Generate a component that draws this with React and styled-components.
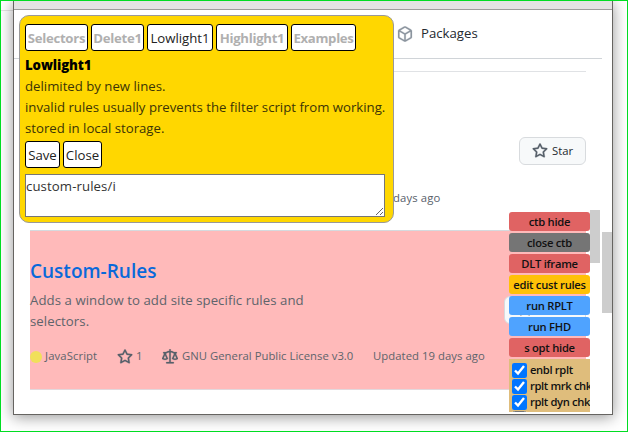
import React from "react";
import styled, { createGlobalStyle } from "styled-components";

const Global = createGlobalStyle`
  *, *::before, *::after { box-sizing: border-box; }
  body { margin: 0; background: #fff; }
  body, button, textarea { font-family: "Open Sans", "Noto Sans", sans-serif; }
`;

const Desktop = styled.div`
  width: 628px;
  height: 432px;
  padding: 0 13px 16px 12px;
  border: 1px solid #00dd22;
  overflow: hidden;
  background: linear-gradient(#e4e4e4, #e4e4e4) 0 9px / 12px 1px no-repeat, #fff;
`;

const Window = styled.div`
  position: relative;
  display: flex;
  flex-direction: column;
  width: 600px;
  height: 414px;
  border: 1px solid #666461;
  border-top: 0;
  background: #fff;
  box-shadow: 0 2px 14px rgba(0, 0, 0, 0.42);
`;

const TitleBar = styled.div`
  flex: none;
  height: 9px;
  background: #e3e3e3;
  border-bottom: 1px solid #9c9c9c;
`;

const Page = styled.div`
  display: flex;
  flex: 1;
  min-height: 0;
`;

const Main = styled.main`
  width: 588px;
`;

const ScrollTrack = styled.div`
  width: 10px;
  padding-top: ${(p) => p.$top || 0}px;
`;

const ScrollThumb = styled.div`
  height: ${(p) => p.$h}px;
  background: #cdcdcd;
`;

const Nav = styled.nav`
  display: flex;
  align-items: center;
  gap: 8px;
  height: 49px;
  padding: 0 0 1px 383px;
  border-bottom: 1px solid #d0d4d8;
`;

const Label = styled.span`
  font-size: ${(p) => p.$size || 13.2}px;
  font-weight: ${(p) => p.$weight || 400};
  letter-spacing: ${(p) => p.$track || 0}px;
  line-height: 1.5;
  white-space: nowrap;
  color: ${(p) => p.$color || "inherit"};
`;

const Repositories = styled.div`
  margin: 12px 16px 0;
  border-top: 1px solid #e0e2e5;
`;

const PreviousRepo = styled.section`
  display: flex;
  flex-direction: column;
  align-items: flex-end;
  height: 158px;
  padding-top: 65px;
`;

const StarButton = styled.button`
  display: flex;
  align-items: center;
  gap: 4px;
  width: ${(p) => p.$w || 67}px;
  height: 28px;
  padding: 0 12px ${(p) => p.$lift || 0}px;
  border: 1px solid #d8dbde;
  border-radius: 6px;
  background: #f7f9fa;
  color: #24292f;
`;

const PreviousDate = styled.div`
  display: flex;
  width: 100%;
  padding: 25px 0 0 363px;
`;

const RepoCard = styled.section`
  display: flex;
  justify-content: space-between;
  height: 160px;
  border-top: 1px solid #d5dade;
  border-bottom: 1px solid #e2d8dc;
  background: #ffbaba;
  color: #5e646b;
`;

const RepoText = styled.div`
  display: flex;
  flex-direction: column;
  width: 460px;
  padding-top: 26px;
`;

const Description = styled.p`
  width: 300px;
  margin: 4px 0 0;
  font-size: 13.2px;
  line-height: 21px;
  letter-spacing: 0.07px;
`;

const Meta = styled.div`
  display: flex;
  align-items: center;
  margin-top: 16px;
  height: 18px;
`;

const MetaItem = styled.div`
  display: flex;
  flex: none;
  align-items: center;
  gap: ${(p) => p.$gap || 3}px;
  width: ${(p) => p.$w}px;
`;

const LanguageDot = styled.i`
  width: 12px;
  height: 12px;
  border-radius: 50%;
  background: #f1e05a;
`;

const CardAction = styled.div`
  flex: none;
  padding-top: 65px;
`;

const RulesPanel = styled.section`
  position: absolute;
  left: 5px;
  top: 14px;
  width: 375px;
  height: 208px;
  padding: 8px 5px;
  border: 1px solid #999;
  border-radius: 10px;
  background: #ffd700;
  color: #3c3406;
`;

const ButtonRow = styled.div`
  display: flex;
  gap: 3px;
`;

const PanelButton = styled.button`
  width: ${(p) => p.$w}px;
  height: 27px;
  padding: 0;
  border: 1px solid #000;
  border-radius: 3px;
  background: #fff;
  color: ${(p) => (p.$dim ? "#b0b0b0" : "#222")};
  font-size: 13.2px;
  font-weight: ${(p) => (p.$dim ? 700 : 400)};
  letter-spacing: ${(p) => (p.$dim ? -0.3 : 0)}px;
  white-space: nowrap;
`;

const Help = styled.div`
  display: flex;
  flex-direction: column;
  padding: 4px 0 2px;
  font-size: 13.2px;
  line-height: 21px;
  white-space: nowrap;
`;

const HelpTitle = styled.strong`
  color: #000;
  font-weight: 800;
  letter-spacing: -0.1px;
`;

const RulesInput = styled.textarea`
  display: block;
  width: 360px;
  height: 43px;
  margin-top: 6px;
  padding: 1px 0;
  border: 1px solid #767676;
  border-radius: 0;
  background: #fff;
  color: #333;
  font-size: 13.2px;
  line-height: 21px;
  letter-spacing: 0.1px;
  resize: both;
`;

const Toolbox = styled.aside`
  position: absolute;
  left: 495px;
  top: 209px;
  display: flex;
  width: 91px;
  height: 202px;
  overflow: hidden;
`;

const ToolList = styled.div`
  display: flex;
  flex-direction: column;
  gap: 2px;
  width: 81px;
  padding-top: 2px;
`;

const toolColors = {
  red: "#e06363",
  gray: "#757575",
  amber: "#ffc107",
  blue: "#4fa3ff",
};

const ToolButton = styled.button`
  flex: none;
  height: 19px;
  padding: 0;
  border: 0;
  border-radius: 3px;
  background: ${(p) => toolColors[p.$tone]};
  color: #111;
  font-size: 11.2px;
  font-weight: 650;
  letter-spacing: -0.25px;
  line-height: 19px;
  white-space: nowrap;
`;

const Options = styled.div`
  flex: none;
  height: 53px;
  padding: 3px 0 0 3px;
  overflow: hidden;
  background: #dfbd7c;
`;

const Option = styled.label`
  display: flex;
  align-items: center;
  gap: 3px;
  height: 16px;
  color: #111;
`;

const Check = styled.input`
  flex: none;
  width: 15px;
  height: 15px;
  margin: 0;
  accent-color: #0075ff;
`;

const icons = {
  star: "M8 .25a.75.75 0 0 1 .673.418l1.882 3.815 4.21.612a.75.75 0 0 1 .416 1.279l-3.046 2.97.719 4.192a.751.751 0 0 1-1.088.791L8 12.347l-3.766 1.98a.75.75 0 0 1-1.088-.79l.72-4.194L.818 6.374a.75.75 0 0 1 .416-1.28l4.21-.611L7.327.668A.75.75 0 0 1 8 .25Zm0 2.445L6.615 5.5a.75.75 0 0 1-.564.41l-3.097.45 2.24 2.184a.75.75 0 0 1 .216.664l-.528 3.084 2.769-1.456a.75.75 0 0 1 .698 0l2.77 1.456-.53-3.084a.75.75 0 0 1 .216-.664l2.24-2.183-3.096-.45a.75.75 0 0 1-.564-.41L8 2.694Z",
  law: "M8.75.75V2h.985c.304 0 .603.08.867.231l1.29.736c.038.022.08.033.124.033h2.234a.75.75 0 0 1 0 1.5h-.427l2.111 4.692a.75.75 0 0 1-.154.838c-.21.21-.47.37-.731.485C14.556 10.78 13.88 11 13 11a4.498 4.498 0 0 1-2.023-.454 3.544 3.544 0 0 1-.758-.505.75.75 0 0 1-.154-.849L12.178 4.5h-.162c-.305 0-.604-.079-.868-.231l-1.29-.736a.245.245 0 0 0-.124-.033H8.75V13h2.5a.75.75 0 0 1 0 1.5h-6.5a.75.75 0 0 1 0-1.5h2.5V3.5h-.984a.245.245 0 0 0-.124.033l-1.289.737c-.265.15-.564.23-.869.23h-.162l2.112 4.692a.75.75 0 0 1-.154.838c-.21.21-.47.37-.731.485C4.556 10.78 3.88 11 3 11a4.498 4.498 0 0 1-2.023-.454 3.544 3.544 0 0 1-.758-.505.75.75 0 0 1-.154-.849L2.178 4.5H1.75a.75.75 0 0 1 0-1.5h2.234a.249.249 0 0 0 .125-.033l1.288-.737c.265-.15.564-.23.869-.23h.984V.75a.75.75 0 0 1 1.5 0Zm2.945 8.477c.285.135.718.273 1.305.273s1.02-.138 1.305-.273L13 6.327Zm-10 0c.285.135.718.273 1.305.273s1.02-.138 1.305-.273L3 6.327Z",
  package:
    "m8.878.392 5.25 3.045c.54.314.872.89.872 1.514v6.098a1.75 1.75 0 0 1-.872 1.514l-5.25 3.045a1.75 1.75 0 0 1-1.756 0l-5.25-3.045A1.75 1.75 0 0 1 1 11.049V4.951c0-.624.332-1.201.872-1.514L7.122.392a1.75 1.75 0 0 1 1.756 0ZM7.875 1.69l-4.63 2.685L8 7.133l4.755-2.758-4.63-2.685a.248.248 0 0 0-.25 0ZM2.5 5.677v5.372c0 .09.047.171.125.216l4.625 2.683V8.432Zm6.25 8.271 4.625-2.683a.25.25 0 0 0 .125-.216V5.677L8.75 8.432Z",
};

const IconSvg = styled.svg`
  flex: none;
  fill: ${(p) => p.$color || "#57606a"};
  stroke: ${(p) => p.$color || "#57606a"};
  stroke-width: 0.2;
`;

const Icon = ({ name, color }) => (
  <IconSvg width="16" height="16" viewBox="0 0 16 16" $color={color}>
    <path fillRule="evenodd" d={icons[name]} />
  </IconSvg>
);

const tabs = [
  { name: "Selectors", w: 63, dim: true },
  { name: "Delete1", w: 53, dim: true },
  { name: "Lowlight1", w: 66 },
  { name: "Highlight1", w: 72, dim: true },
  { name: "Examples", w: 65, dim: true },
];

const tools = [
  { name: "ctb hide", tone: "red" },
  { name: "close ctb", tone: "gray" },
  { name: "DLT iframe", tone: "red" },
  { name: "edit cust rules", tone: "amber" },
  { name: "run RPLT", tone: "blue" },
  { name: "run FHD", tone: "blue" },
  { name: "s opt hide", tone: "red" },
];

const options = ["enbl rplt", "rplt mrk chk", "rplt dyn chk"];

export default function App() {
  return (
    <Desktop>
      <Global />
      <Window>
        <TitleBar />
        <Page>
          <Main>
            <Nav>
              <Icon name="package" color="#8c959f" />
              <Label $color="#24292f">Packages</Label>
            </Nav>
            <Repositories>
              <PreviousRepo>
                <StarButton>
                  <Icon name="star" />
                  <Label $size={11.3}>Star</Label>
                </StarButton>
                <PreviousDate>
                  <Label $size={11.3} $track={0.12} $color="#57606a">days ago</Label>
                </PreviousDate>
              </PreviousRepo>
              <RepoCard>
                <RepoText>
                  <Label $size={19} $weight={600} $color="#0969da">Custom-Rules</Label>
                  <Description>
                    Adds a window to add site specific rules and selectors.
                  </Description>
                  <Meta>
                    <MetaItem $w={87}>
                      <LanguageDot />
                      <Label $size={11.3} $track={0.1}>JavaScript</Label>
                    </MetaItem>
                    <MetaItem $w={45}>
                      <Icon name="star" />
                      <Label $size={11.3}>1</Label>
                    </MetaItem>
                    <MetaItem $w={211} $gap={4}>
                      <Icon name="law" />
                      <Label $size={11.3} $track={0.02}>GNU General Public License v3.0</Label>
                    </MetaItem>
                    <Label $size={11.3} $track={0.06}>Updated 19 days ago</Label>
                  </Meta>
                </RepoText>
                <CardAction>
                  <StarButton $w={82} $lift={2}>
                    <Icon name="star" />
                  </StarButton>
                </CardAction>
              </RepoCard>
            </Repositories>
          </Main>
          <ScrollTrack $top={222}>
            <ScrollThumb $h={81} />
          </ScrollTrack>
        </Page>

        <RulesPanel>
          <ButtonRow>
            {tabs.map((t) => (
              <PanelButton key={t.name} $w={t.w} $dim={t.dim}>
                {t.name}
              </PanelButton>
            ))}
          </ButtonRow>
          <Help>
            <HelpTitle>Lowlight1</HelpTitle>
            <span>delimited by new lines.</span>
            <span>invalid rules usually prevents the filter script from working.</span>
            <span>stored in local storage.</span>
          </Help>
          <ButtonRow>
            <PanelButton $w={35}>Save</PanelButton>
            <PanelButton $w={39}>Close</PanelButton>
          </ButtonRow>
          <RulesInput defaultValue="custom-rules/i" spellCheck={false} />
        </RulesPanel>

        <Toolbox>
          <ToolList>
            {tools.map((t) => (
              <ToolButton key={t.name} $tone={t.tone}>
                {t.name}
              </ToolButton>
            ))}
            <Options>
              {options.map((o) => (
                <Option key={o}>
                  <Check type="checkbox" defaultChecked />
                  <Label $size={11.2} $weight={650} $track={-0.35}>{o}</Label>
                </Option>
              ))}
              <Option>
                <Check type="checkbox" />
              </Option>
            </Options>
          </ToolList>
          <ScrollTrack>
            <ScrollThumb $h={53} />
          </ScrollTrack>
        </Toolbox>
      </Window>
    </Desktop>
  );
}
